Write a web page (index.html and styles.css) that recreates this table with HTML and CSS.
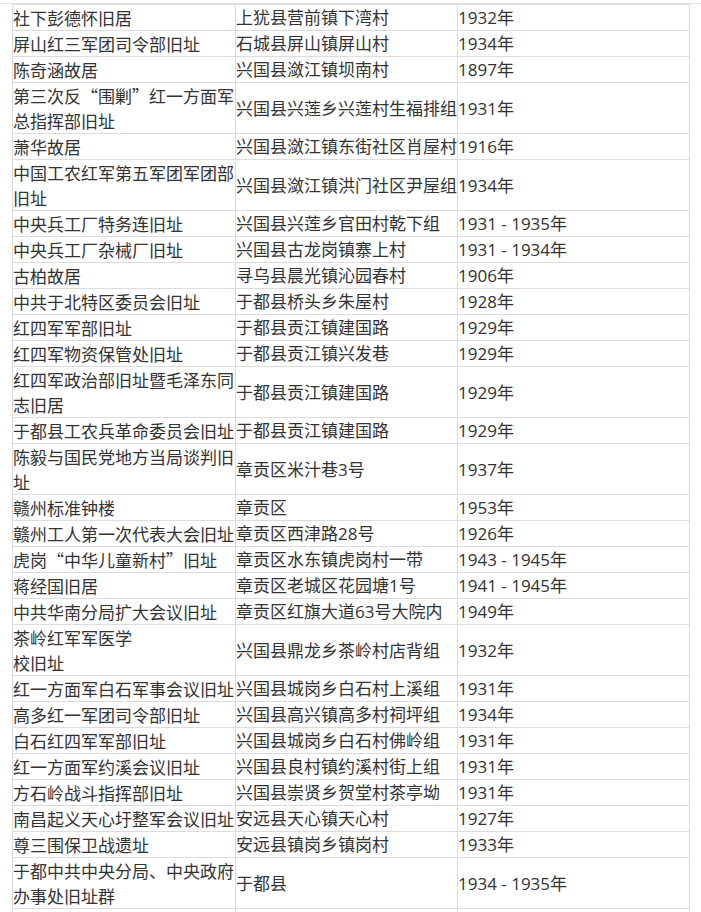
FILE: index.html
```html
<!DOCTYPE html>
<html lang="zh-CN">
<head>
<meta charset="utf-8">
<title>革命旧址列表</title>
<link rel="stylesheet" href="styles.css">
</head>
<body>
<div class="topline"></div>
<table class="sites">
<colgroup><col class="c1"><col class="c2"><col class="c3"></colgroup>
<tbody>
<tr><td>社下彭德怀旧居</td><td>上犹县营前镇下湾村</td><td>1932年</td></tr>
<tr><td>屏山红三军团司令部旧址</td><td>石城县屏山镇屏山村</td><td>1934年</td></tr>
<tr><td>陈奇涵故居</td><td>兴国县潋江镇坝南村</td><td>1897年</td></tr>
<tr><td>第三次反“围剿”红一方面军总指挥部旧址</td><td>兴国县兴莲乡兴莲村生福排组</td><td>1931年</td></tr>
<tr><td>萧华故居</td><td>兴国县潋江镇东街社区肖屋村</td><td>1916年</td></tr>
<tr><td>中国工农红军第五军团军团部旧址</td><td>兴国县潋江镇洪门社区尹屋组</td><td>1934年</td></tr>
<tr><td>中央兵工厂特务连旧址</td><td>兴国县兴莲乡官田村乾下组</td><td>1931 - 1935年</td></tr>
<tr><td>中央兵工厂杂械厂旧址</td><td>兴国县古龙岗镇寨上村</td><td>1931 - 1934年</td></tr>
<tr><td>古柏故居</td><td>寻乌县晨光镇沁园春村</td><td>1906年</td></tr>
<tr><td>中共于北特区委员会旧址</td><td>于都县桥头乡朱屋村</td><td>1928年</td></tr>
<tr><td>红四军军部旧址</td><td>于都县贡江镇建国路</td><td>1929年</td></tr>
<tr><td>红四军物资保管处旧址</td><td>于都县贡江镇兴发巷</td><td>1929年</td></tr>
<tr><td>红四军政治部旧址暨毛泽东同志旧居</td><td>于都县贡江镇建国路</td><td>1929年</td></tr>
<tr><td>于都县工农兵革命委员会旧址</td><td>于都县贡江镇建国路</td><td>1929年</td></tr>
<tr><td>陈毅与国民党地方当局谈判旧址</td><td>章贡区米汁巷3号</td><td>1937年</td></tr>
<tr><td>赣州标准钟楼</td><td>章贡区</td><td>1953年</td></tr>
<tr><td>赣州工人第一次代表大会旧址</td><td>章贡区西津路28号</td><td>1926年</td></tr>
<tr><td>虎岗“中华儿童新村”旧址</td><td>章贡区水东镇虎岗村一带</td><td>1943 - 1945年</td></tr>
<tr><td>蒋经国旧居</td><td>章贡区老城区花园塘1号</td><td>1941 - 1945年</td></tr>
<tr><td>中共华南分局扩大会议旧址</td><td>章贡区红旗大道63号大院内</td><td>1949年</td></tr>
<tr><td>茶岭红军军医学<br>校旧址</td><td>兴国县鼎龙乡茶岭村店背组</td><td>1932年</td></tr>
<tr><td>红一方面军白石军事会议旧址</td><td>兴国县城岗乡白石村上溪组</td><td>1931年</td></tr>
<tr><td>高多红一军团司令部旧址</td><td>兴国县高兴镇高多村祠坪组</td><td>1934年</td></tr>
<tr><td>白石红四军军部旧址</td><td>兴国县城岗乡白石村佛岭组</td><td>1931年</td></tr>
<tr><td>红一方面军约溪会议旧址</td><td>兴国县良村镇约溪村街上组</td><td>1931年</td></tr>
<tr><td>方石岭战斗指挥部旧址</td><td>兴国县崇贤乡贺堂村茶亭坳</td><td>1931年</td></tr>
<tr><td>南昌起义天心圩整军会议旧址</td><td>安远县天心镇天心村</td><td>1927年</td></tr>
<tr><td>尊三围保卫战遗址</td><td>安远县镇岗乡镇岗村</td><td>1933年</td></tr>
<tr><td>于都中共中央分局、中央政府办事处旧址群</td><td>于都县</td><td>1934 - 1935年</td></tr>
<tr><td>&nbsp;</td><td>&nbsp;</td><td>&nbsp;</td></tr>
</tbody>
</table>
</body>
</html>
```
FILE: styles.css
```css
html, body {
  margin: 0;
  padding: 0;
  background: #ffffff;
  overflow: hidden;
}

body {
  padding-top: 3px;
  font-family: "Open Sans", "Noto Sans CJK SC", sans-serif;
  font-size: 17px;
  color: #333333;
}

.topline {
  height: 1px;
  background: #e2e2e2;
}

.sites {
  margin-left: 12px;
  width: 677px;
  table-layout: fixed;
  border-collapse: collapse;
}

.sites .c1 { width: 223px; }
.sites .c2 { width: 222px; }
.sites .c3 { width: 232px; }

.sites td {
  border: 1px solid #dcdcdc;
  padding: 0;
  line-height: 25px;
  vertical-align: middle;
  text-align: left;
  word-break: break-all;
}

.sites td:first-child {
  font-family: "Noto Sans CJK SC", sans-serif;
}
```
